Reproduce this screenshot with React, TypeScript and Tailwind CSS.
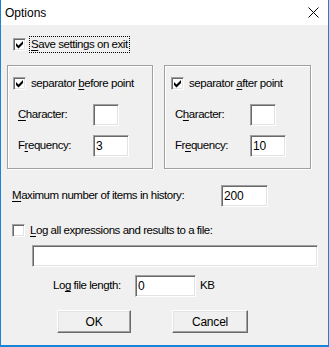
import React from "react";

const font = { fontFamily: '"Liberation Sans", Arial, sans-serif' };

function Chk({ checked }: { checked?: boolean }) {
  return (
    <span className="relative block w-[13px] h-[13px] shrink-0 bg-white border border-t-[#a0a0a0] border-l-[#a0a0a0] border-b-white border-r-white shadow-[inset_1px_1px_0_#696969,inset_-1px_-1px_0_#e3e3e3]">
      {checked && (
        <svg className="absolute inset-0" width="11" height="11" viewBox="0 0 11 11">
          <polygon points="2,4 4.5,6.5 9,2 9,5 4.5,9.5 2,7" fill="#000" />
        </svg>
      )}
    </span>
  );
}

function Field({ w, value }: { w: string; value?: string }) {
  return (
    <div
      className={`${w} h-[22px] shrink-0 bg-white flex items-center pl-[2px] text-[12px] tracking-[-0.2px] border border-t-[#a0a0a0] border-l-[#a0a0a0] border-b-white border-r-white shadow-[inset_1px_1px_0_#696969,inset_-1px_-1px_0_#e3e3e3]`}
    >
      {value}
    </div>
  );
}

function Btn({ children, w }: { children: React.ReactNode; w: string }) {
  return (
    <div
      className={`${w} h-[23px] flex items-center justify-center bg-[#f0f0f0] text-[12px] tracking-[-0.2px] border border-t-white border-l-white border-b-[#696969] border-r-[#696969] shadow-[inset_-1px_-1px_0_#a0a0a0,inset_1px_1px_0_#e3e3e3]`}
    >
      {children}
    </div>
  );
}

function Group({
  title,
  chkX,
  charU,
  freqU,
  freq,
  freqW,
  w,
}: {
  title: [string, string, string];
  chkX: string;
  charU: [string, string, string];
  freqU: [string, string, string];
  freq: string;
  freqW: string;
  w: string;
}) {
  return (
    <div className={`${w} h-[104px] border border-[#a0a0a0] shadow-[inset_1px_1px_0_#fff,1px_1px_0_#fff] flex flex-col`}>
      <div className={`mt-[11px] ${chkX} flex items-center h-[13px] gap-[5px]`}>
        <Chk checked />
        <span className="whitespace-nowrap">
          {title[0]}
          <span className="underline underline-offset-2">{title[1]}</span>
          {title[2]}
        </span>
      </div>
      <div className="mt-[14px] flex items-center h-[22px] pl-[10px]">
        <span className="w-[75px] whitespace-nowrap">
          {charU[0]}
          <span className="underline underline-offset-2">{charU[1]}</span>
          {charU[2]}
        </span>
        <Field w="w-[26px]" />
      </div>
      <div className="mt-[9px] flex items-center h-[22px] pl-[10px]">
        <span className="w-[75px] whitespace-nowrap">
          {freqU[0]}
          <span className="underline underline-offset-2">{freqU[1]}</span>
          {freqU[2]}
        </span>
        <Field w={freqW} value={freq} />
      </div>
    </div>
  );
}

export default function App() {
  return (
    <div
      className="w-[329px] h-[347px] flex flex-col bg-[#f0f0f0] border-x border-b-2 border-[#1883d7] text-black text-[11.5px] tracking-[-0.45px] overflow-hidden"
      style={font}
    >
      <div className="h-[25px] shrink-0 bg-white flex items-center justify-between pl-[4px] pr-[9px]">
        <span className="text-[12px] tracking-normal">Options</span>
        <svg width="11" height="11" viewBox="0 0 11 11">
          <path d="M0.5 0.5 L10.5 10.5 M10.5 0.5 L0.5 10.5" stroke="#000" strokeWidth="1" />
        </svg>
      </div>

      <div className="flex flex-col">
        <div className="mt-[11px] h-[17px] flex items-center pl-[12px] gap-[3px]">
          <Chk checked />
          <span className="border border-dotted border-black px-[1px] py-[1px] leading-none h-[17px] flex items-center whitespace-nowrap">
            <span className="underline underline-offset-2">S</span>ave settings on exit
          </span>
        </div>

        <div className="mt-[12px] flex pl-[6px] gap-[11px]">
          <Group
            w="w-[146px]"
            chkX="pl-[5px]"
            title={["separator ", "b", "efore point"]}
            charU={["", "C", "haracter:"]}
            freqU={["F", "r", "equency:"]}
            freq="3"
            freqW="w-[36px]"
          />
          <Group
            w="w-[147px]"
            chkX="pl-[6px]"
            title={["separator ", "a", "fter point"]}
            charU={["C", "h", "aracter:"]}
            freqU={["Fr", "e", "quency:"]}
            freq="10"
            freqW="w-[36px]"
          />
        </div>

        <div className="mt-[16px] h-[22px] flex items-center pl-[11px]">
          <span className="w-[209px] whitespace-nowrap">
            <span className="underline underline-offset-2">M</span>aximum number of items in history:
          </span>
          <Field w="w-[47px]" value="200" />
        </div>

        <div className="mt-[17px] h-[13px] flex items-center pl-[11px] gap-[5px]">
          <Chk />
          <span className="whitespace-nowrap">
            <span className="underline underline-offset-2">L</span>og all expressions and results to a file:
          </span>
        </div>

        <div className="mt-[8px] pl-[31px]">
          <Field w="w-[286px]" />
        </div>

        <div className="mt-[8px] h-[22px] flex items-center pl-[52px]">
          <span className="w-[82px] whitespace-nowrap">
            Lo<span className="underline underline-offset-2">g</span> file length:
          </span>
          <Field w="w-[61px]" value="0" />
          <span className="ml-[4px]">KB</span>
        </div>

        <div className="mt-[13px] flex pl-[56px] gap-[41px]">
          <Btn w="w-[74px]">OK</Btn>
          <Btn w="w-[76px]">Cancel</Btn>
        </div>
      </div>
    </div>
  );
}
